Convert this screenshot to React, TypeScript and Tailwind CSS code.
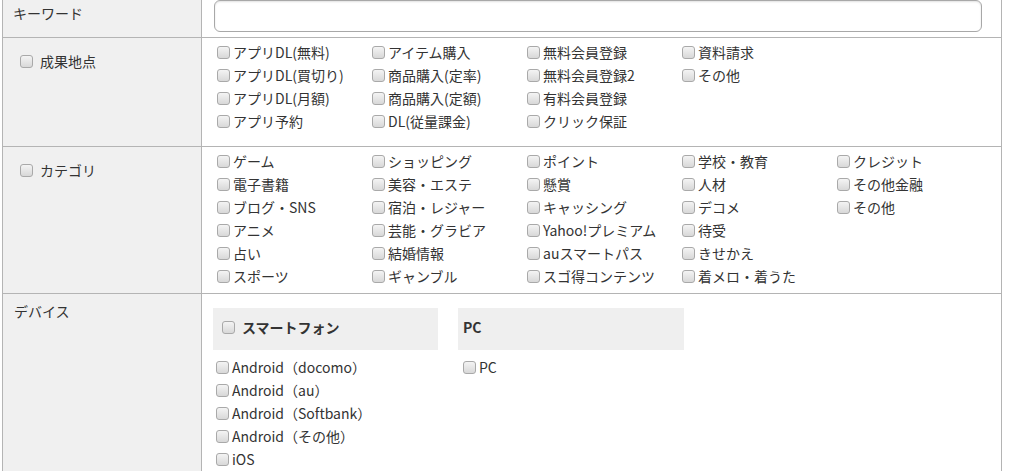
import React from "react";

const conversionPoints = [
  ["アプリDL(無料)", "アプリDL(買切り)", "アプリDL(月額)", "アプリ予約"],
  ["アイテム購入", "商品購入(定率)", "商品購入(定額)", "DL(従量課金)"],
  ["無料会員登録", "無料会員登録2", "有料会員登録", "クリック保証"],
  ["資料請求", "その他"],
];

const categories = [
  ["ゲーム", "電子書籍", "ブログ・SNS", "アニメ", "占い", "スポーツ"],
  ["ショッピング", "美容・エステ", "宿泊・レジャー", "芸能・グラビア", "結婚情報", "ギャンブル"],
  ["ポイント", "懸賞", "キャッシング", "Yahoo!プレミアム", "auスマートパス", "スゴ得コンテンツ"],
  ["学校・教育", "人材", "デコメ", "待受", "きせかえ", "着メロ・着うた"],
  ["クレジット", "その他金融", "その他"],
];

const smartphones = [
  "Android（docomo）",
  "Android（au）",
  "Android（Softbank）",
  "Android（その他）",
  "iOS",
];

function Box() {
  return (
    <span className="inline-block h-[13px] w-[13px] shrink-0 rounded-[3px] border border-[#a9a9a9] bg-gradient-to-b from-[#f4f4f4] to-[#d8d8d8]" />
  );
}

function Check({ label }: { label: string }) {
  return (
    <label className="flex h-[23px] items-center gap-[3px] whitespace-nowrap">
      <Box />
      <span>{label}</span>
    </label>
  );
}

function Columns({ cols }: { cols: string[][] }) {
  return (
    <div className="flex pl-[15px] pt-[3px]">
      {cols.map((col, i) => (
        <div key={i} className="flex w-[155px] flex-col">
          {col.map((item) => (
            <Check key={item} label={item} />
          ))}
        </div>
      ))}
    </div>
  );
}

export default function App() {
  return (
    <div
      className="bg-white text-[14px] leading-[23px] text-[#333]"
      style={{ fontFamily: '"Noto Sans CJK JP", "Noto Sans", sans-serif' }}
    >
      <div className="ml-[2px] w-[1000px] border-x border-[#b4b4b4]">
        {/* keyword */}
        <div className="flex h-[38px] border-b border-[#b4b4b4]">
          <div className="w-[199px] shrink-0 border-r border-[#b4b4b4] bg-[#f0f0f0] pl-[10px] pt-[2px]">
            キーワード
          </div>
          <div className="flex-1 pl-[12px] pr-[19px]">
            <input
              type="text"
              className="block h-[32px] w-full rounded-[6px] border border-[#a8a8a8] bg-white shadow-[inset_0_1px_2px_rgba(0,0,0,0.12)] outline-none"
            />
          </div>
        </div>

        {/* conversion point */}
        <div className="flex h-[109px] border-b border-[#b4b4b4]">
          <div className="w-[199px] shrink-0 border-r border-[#b4b4b4] bg-[#f0f0f0] pl-[17px] pt-[12px]">
            <label className="flex items-center gap-[7px]">
              <Box />
              <span>成果地点</span>
            </label>
          </div>
          <div className="flex-1">
            <Columns cols={conversionPoints} />
          </div>
        </div>

        {/* category */}
        <div className="flex h-[147px] border-b border-[#b4b4b4]">
          <div className="w-[199px] shrink-0 border-r border-[#b4b4b4] bg-[#f0f0f0] pl-[17px] pt-[12px]">
            <label className="flex items-center gap-[7px]">
              <Box />
              <span>カテゴリ</span>
            </label>
          </div>
          <div className="flex-1">
            <Columns cols={categories} />
          </div>
        </div>

        {/* device */}
        <div className="flex h-[190px]">
          <div className="w-[199px] shrink-0 border-r border-[#b4b4b4] bg-[#f0f0f0] pl-[11px] pt-[6px]">
            デバイス
          </div>
          <div className="flex flex-1 gap-[20px] pl-[11px] pt-[14px]">
            <div className="w-[225px]">
              <div className="flex h-[42px] items-center gap-[7px] bg-[#efefef] pb-[3px] pl-[9px] font-bold">
                <Box />
                <span>スマートフォン</span>
              </div>
              <div className="flex flex-col pl-[3px] pt-[6px]">
                {smartphones.map((s) => (
                  <Check key={s} label={s} />
                ))}
              </div>
            </div>
            <div className="w-[226px]">
              <div className="flex h-[42px] items-center bg-[#efefef] pb-[3px] pl-[5px] font-bold">
                PC
              </div>
              <div className="flex flex-col pl-[5px] pt-[6px]">
                <Check label="PC" />
              </div>
            </div>
          </div>
        </div>
      </div>
    </div>
  );
}
